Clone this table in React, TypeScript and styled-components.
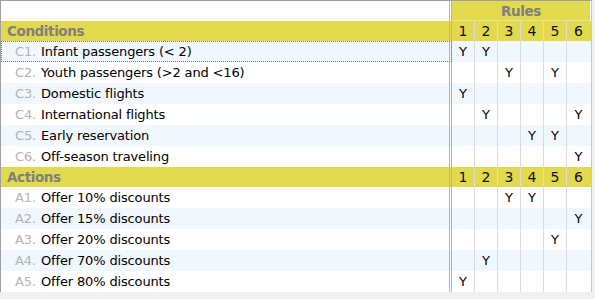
import styled, { createGlobalStyle } from "styled-components";

// data
const RULES = [1, 2, 3, 4, 5, 6];

type Row = { code: string; text: string; hits: number[] };

const CONDITIONS: Row[] = [
  { code: "C1.", text: "Infant passengers (< 2)", hits: [1, 2] },
  { code: "C2.", text: "Youth passengers (>2 and <16)", hits: [3, 5] },
  { code: "C3.", text: "Domestic flights", hits: [1] },
  { code: "C4.", text: "International flights", hits: [2, 6] },
  { code: "C5.", text: "Early reservation", hits: [4, 5] },
  { code: "C6.", text: "Off-season traveling", hits: [6] },
];

const ACTIONS: Row[] = [
  { code: "A1.", text: "Offer 10% discounts", hits: [3, 4] },
  { code: "A2.", text: "Offer 15% discounts", hits: [6] },
  { code: "A3.", text: "Offer 20% discounts", hits: [5] },
  { code: "A4.", text: "Offer 70% discounts", hits: [2] },
  { code: "A5.", text: "Offer 80% discounts", hits: [1] },
];

// styles
const GlobalStyle = createGlobalStyle`
  html, body {
    margin: 0;
    background: #f0f0f0;
  }
  body {
    font-family: "DejaVu Sans", Verdana, sans-serif;
    font-size: 13px;
    letter-spacing: -0.15px;
    color: #000;
  }
`;

const Table = styled.div`
  width: 590px;
  background: #fff;
  border-left: 1px solid #a0a0a0;
  border-top: 1px solid #a0a0a0;
  border-right: 1px solid #c8c8c8;
`;

const GridRow = styled.div<{ $bg: string; $h: number }>`
  display: grid;
  grid-template-columns: 451px repeat(6, 23px);
  height: ${(p) => p.$h}px;
  background: ${(p) => p.$bg};
`;

const LabelCell = styled.div<{ $focused?: boolean }>`
  display: flex;
  align-items: center;
  padding-left: 14px;
  border-right: 3px double #b4b4b4;
  white-space: nowrap;
  outline: ${(p) => (p.$focused ? "1px dotted #7a7a7a" : "none")};
  outline-offset: -1px;
`;

const SectionLabel = styled(LabelCell)`
  padding-left: 6px;
  font-weight: bold;
  color: #7f7f7f;
  font-size: 13.5px;
  letter-spacing: -0.4px;
`;

const Code = styled.span`
  color: #b4b4b4;
  width: 26px;
  flex: none;
`;

const RuleCell = styled.div`
  display: flex;
  align-items: center;
  justify-content: center;
  border-right: 1px solid #dcdcdc;
  &:last-child {
    border-right: none;
  }
`;

const NumberCell = styled(RuleCell)`
  font-size: 14px;
  color: #111;
`;

const RulesTitle = styled.div`
  grid-column: 2 / span 6;
  display: flex;
  align-items: center;
  justify-content: center;
  background: #e2d94e;
  border-bottom: 1px solid #ebe48a;
  font-weight: bold;
  font-size: 13.5px;
  letter-spacing: -0.4px;
  color: #7f7f7f;
`;

const BlankHead = styled.div`
  border-right: 3px double #b4b4b4;
`;

const YELLOW = "#e2d94e";
const STRIPE = "#f0f7fe";

function Section({ title, rows, stripeOdd }: { title: string; rows: Row[]; stripeOdd: boolean }) {
  return (
    <>
      <GridRow $bg={YELLOW} $h={20}>
        <SectionLabel>{title}</SectionLabel>
        {RULES.map((r) => (
          <NumberCell key={r}>{r}</NumberCell>
        ))}
      </GridRow>
      {rows.map((row, i) => (
        <GridRow key={row.code} $bg={(i % 2 === 0) === stripeOdd ? STRIPE : "#fff"} $h={21}>
          <LabelCell $focused={row.code === "C1."}>
            <Code>{row.code}</Code>
            {row.text}
          </LabelCell>
          {RULES.map((r) => (
            <RuleCell key={r}>{row.hits.includes(r) ? "Y" : ""}</RuleCell>
          ))}
        </GridRow>
      ))}
    </>
  );
}

export default function App() {
  return (
    <>
      <GlobalStyle />
      <Table>
        <GridRow $bg="#fff" $h={20}>
          <BlankHead />
          <RulesTitle>Rules</RulesTitle>
        </GridRow>
        <Section title="Conditions" rows={CONDITIONS} stripeOdd={true} />
        <Section title="Actions" rows={ACTIONS} stripeOdd={false} />
      </Table>
    </>
  );
}
